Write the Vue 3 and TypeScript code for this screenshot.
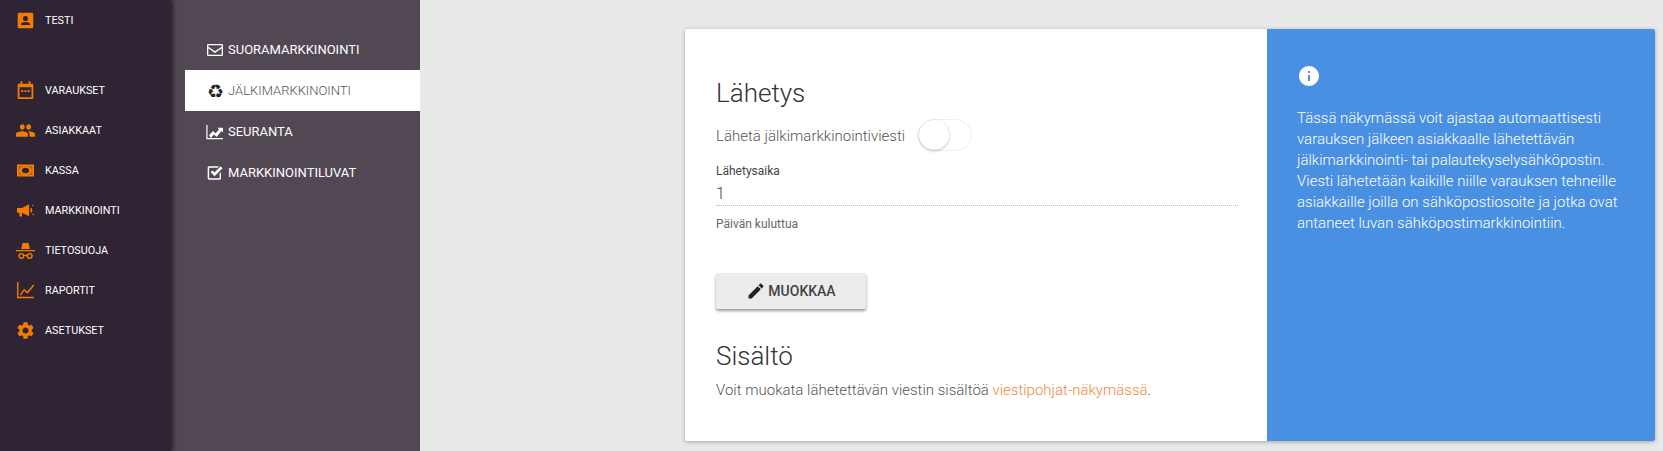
<template>
  <div class="app-shell">
    <aside class="main-nav">
      <a class="nav-item user-item">
        <svg class="nav-icon" viewBox="0 0 24 24"><path d="M3 1h18a2 2 0 0 1 2 2v18a2 2 0 0 1-2 2H3a2 2 0 0 1-2-2V3a2 2 0 0 1 2-2zm9 4.500a3.600 3.600 0 1 0 0 7.200 3.600 3.600 0 0 0 0-7.200zM5.500 18.500h13v-1.200c0-2.200-3.600-3.300-6.500-3.300s-6.500 1.100-6.500 3.300z" fill-rule="evenodd" /></svg>
        <span>TESTI</span>
      </a>
      <div class="nav-list">
        <a v-for="item in navItems" :key="item.label" class="nav-item">
          <svg class="nav-icon" viewBox="0 0 24 24" v-html="item.icon"></svg>
          <span>{{ item.label }}</span>
        </a>
      </div>
    </aside>

    <nav class="sub-nav">
      <a v-for="item in subItems" :key="item.label" class="sub-item" :class="{ active: item.active }">
        <span v-if="item.glyph" class="sub-glyph">{{ item.glyph }}</span>
        <svg v-else class="sub-icon" viewBox="0 0 24 24" v-html="item.icon"></svg>
        <span>{{ item.label }}</span>
      </a>
    </nav>

    <main class="content">
      <section class="card">
        <div class="card-body">
          <h2 class="title">Lähetys</h2>
          <div class="toggle-row">
            <span class="toggle-label">Lähetä jälkimarkkinointiviesti</span>
            <span class="toggle"><span class="knob"></span></span>
          </div>
          <div class="field">
            <label>Lähetysaika</label>
            <div class="field-value">1</div>
            <div class="field-hint">Päivän kuluttua</div>
          </div>
          <button class="edit-btn" type="button">
            <svg viewBox="0 0 24 24"><path d="M3 17.250V21h3.750L17.810 9.940l-3.750-3.750L3 17.250zM20.710 7.040c.39-.39.39-1.020 0-1.410l-2.340-2.340c-.39-.39-1.020-.39-1.410 0l-1.830 1.830 3.750 3.750 1.830-1.830z" /></svg>
            MUOKKAA
          </button>
          <h2 class="title second">Sisältö</h2>
          <p class="content-text">Voit muokata lähetettävän viestin sisältöä <a>viestipohjat-näkymässä</a>.</p>
        </div>
        <div class="info-panel">
          <svg class="info-icon" viewBox="2 2 20 20"><path d="M12 2C6.480 2 2 6.480 2 12s4.480 10 10 10 10-4.480 10-10S17.520 2 12 2zm1 15h-2v-6h2v6zm0-8h-2V7h2v2z" /></svg>
          <p>Tässä näkymässä voit ajastaa automaattisesti varauksen jälkeen asiakkaalle lähetettävän jälkimarkkinointi- tai palautekyselysähköpostin. Viesti lähetetään kaikille niille varauksen tehneille asiakkaille joilla on sähköpostiosoite ja jotka ovat antaneet luvan sähköpostimarkkinointiin.</p>
        </div>
      </section>
    </main>
  </div>
</template>

<script setup lang="ts">
interface NavItem {
  label: string
  icon: string
}

interface SubItem {
  label: string
  icon?: string
  glyph?: string
  active?: boolean
}

const navItems: NavItem[] = [
  {
    label: 'VARAUKSET',
    icon: '<path fill-rule="evenodd" d="M5 -1h2.500v3.500h9V-1H19v3.500h2.500A1.500 1.500 0 0 1 23 4v18.500a1.500 1.500 0 0 1-1.500 1.500h-19A1.500 1.500 0 0 1 1 22.500V4a1.500 1.500 0 0 1 1.500-1.500H5zM3.500 7.500V21.500h17V7.500z"/><path d="M6 11.500h3V14H6zm4.500 0h3V14h-3zm4.500 0h3V14h-3z"/>'
  },
  {
    label: 'ASIAKKAAT',
    icon: '<g transform="translate(12 12) scale(1.120) translate(-12 -12)"><path d="M16 11c1.660 0 2.990-1.340 2.990-3.500S17.660 4 16 4c-1.660 0-3 1.340-3 3.500s1.340 3.500 3 3.500zm-8 0c1.660 0 2.990-1.340 2.990-3.500S9.660 4 8 4C6.340 4 5 5.340 5 7.500S6.340 11 8 11zm0 2c-2.330 0-8 1.170-8 3.500V20h15v-3.500c0-2.330-4.670-3.500-7-3.500zm8 0c-.29 0-.62.020-.97.050 1.160.84 1.970 1.970 1.970 3.450V20h7v-3.500c0-2.330-5.670-3.500-8-3.500z"/></g>'
  },
  {
    label: 'KASSA',
    icon: '<path d="M0 3.500h24v17H0z"/><path d="M2.500 6h19v12h-19z" fill="#a85c14"/><ellipse cx="12" cy="12" rx="9" ry="6.500"/><ellipse cx="12" cy="12" rx="5" ry="3.800" fill="#2e2433"/>'
  },
  {
    label: 'MARKKINOINTI',
    icon: '<path d="M0 8.500h7L17 3v17L7 15v5.500H3.500V15H0z"/><path d="M19 8c1.600 0 2.600 1.600 2.600 3.500S20.600 15 19 15z"/><path d="M22 3.500l1.500 1-1 1.500-1.500-1zM22 17l1.500-1 .5 2-1.500 1z"/>'
  },
  {
    label: 'TIETOSUOJA',
    icon: '<g transform="translate(12 12) scale(1.120) translate(-12 -12)"><path fill-rule="evenodd" d="M6.500 10 8 3.500c.2-1 1-1.500 2-1.200l2 .7 2-.7c1-.3 1.800.2 2 1.200l1.500 6.500zM0 11.500h24V13H0zM6.700 15a3.800 3.800 0 1 1 0 7.600 3.800 3.800 0 0 1 0-7.600zm0 1.700a2.100 2.100 0 1 0 0 4.200 2.100 2.100 0 0 0 0-4.200zM17.300 15a3.800 3.800 0 1 1 0 7.600 3.800 3.800 0 0 1 0-7.600zm0 1.700a2.100 2.100 0 1 0 0 4.200 2.100 2.100 0 0 0 0-4.200zM10.500 17.500h3v1.700h-3z"/></g>'
  },
  {
    label: 'RAPORTIT',
    icon: '<path d="M0 0h2v20.800h22V23H0z"/><path d="M4 18l6-8.500 4.500 4L23 3.500l1.500 1.300L14.800 16.500l-4.500-4-4.700 6.700z"/>'
  },
  {
    label: 'ASETUKSET',
    icon: '<path transform="translate(-2.400 -2.400) scale(1.200)" d="M19.140 12.940c.04-.3.06-.61.060-.94 0-.32-.02-.64-.07-.94l2.030-1.580c.18-.14.230-.41.120-.61l-1.920-3.320c-.12-.22-.37-.29-.59-.22l-2.390.96c-.5-.38-1.030-.7-1.620-.94l-.36-2.540c-.04-.24-.24-.41-.48-.41h-3.840c-.24 0-.43.17-.47.41l-.36 2.540c-.59.24-1.130.57-1.620.94l-2.390-.96c-.22-.08-.47 0-.59.22L2.740 8.870c-.12.21-.08.47.12.61l2.030 1.580c-.05.3-.09.63-.09.94s.02.64.07.94l-2.030 1.580c-.18.14-.23.41-.12.61l1.920 3.320c.12.22.37.29.59.22l2.390-.96c.5.38 1.030.7 1.620.94l.36 2.540c.05.24.24.41.48.41h3.840c.24 0 .44-.17.47-.41l.36-2.540c.59-.24 1.130-.56 1.620-.94l2.390.96c.22.08.47 0 .59-.22l1.920-3.320c.12-.22.07-.47-.12-.61l-2.010-1.580zM12 15.600c-1.980 0-3.600-1.620-3.600-3.600s1.620-3.600 3.600-3.600 3.600 1.620 3.600 3.600-1.620 3.600-3.600 3.600z"/>'
  }
]

const subItems: SubItem[] = [
  {
    label: 'SUORAMARKKINOINTI',
    icon: '<path fill-rule="evenodd" d="M2 3h20a2 2 0 0 1 2 2v14a2 2 0 0 1-2 2H2a2 2 0 0 1-2-2V5a2 2 0 0 1 2-2zm0 2v2l10 7 10-7V5zm0 4.500V19h20V9.500L12 16.500z"/>'
  },
  { label: 'JÄLKIMARKKINOINTI', glyph: '\u267B', active: true },
  {
    label: 'SEURANTA',
    icon: '<path d="M-1 1.500h1.800V21H24v2H-1z"/><path d="M3 17l6-6.500 4 3.500 5-6-2.300-2.300H24v7l-2.300-2.300-7.300 9-4-3.500-4.700 5z"/>'
  },
  {
    label: 'MARKKINOINTILUVAT',
    icon: '<path fill-rule="evenodd" d="M3 2h15l-2 2.200H3.200v15.600h15.600V13l2.200-2.200V20a2 2 0 0 1-2 2H3a2 2 0 0 1-2-2V4a2 2 0 0 1 2-2z"/><path d="M5.500 11l2.800-2.800 3 3L20.500 2 23.300 4.800 11.300 16.800z"/>'
  }
]
</script>

<style>
html,
body {
  margin: 0;
  background: #e9e9e9;
}
</style>

<style scoped>
.app-shell {
  display: flex;
  height: 451px;
  overflow: hidden;
  font-family: Roboto, "Liberation Sans", sans-serif;
  background: #e9e9e9;
}

.main-nav {
  position: relative;
  z-index: 2;
  flex: 0 0 171px;
  box-sizing: border-box;
  background: #2e2433;
  box-shadow: 2px 0 4px rgba(0, 0, 0, 0.55);
}

.nav-list {
  margin-top: 30px;
}

.nav-item {
  display: flex;
  align-items: center;
  height: 40px;
  padding-left: 17px;
  color: #fff;
  font-size: 10.8px;
}

.nav-item span {
  margin-left: 11px;
}

.nav-icon {
  width: 17px;
  height: 17px;
  overflow: visible;
  fill: #f57c00;
}

.sub-nav {
  flex: 0 0 249px;
  box-sizing: border-box;
  padding: 29px 0 0 14px;
  background: #524853;
}

.sub-item {
  display: flex;
  align-items: center;
  height: 41px;
  padding-left: 22px;
  color: #fff;
  font-size: 13px;
}

.sub-item.active {
  background: #fff;
  color: #555;
  font-weight: 300;
}

.sub-icon {
  width: 16px;
  height: 16px;
  margin-right: 5px;
  overflow: visible;
  fill: #fff;
}

.sub-glyph {
  width: 16px;
  margin-right: 5px;
  color: #222;
  font-family: "DejaVu Sans", sans-serif;
  font-size: 19px;
  line-height: 16px;
  text-align: center;
}

.content {
  flex: 1;
  box-sizing: border-box;
  padding: 29px 8px 10px 265px;
}

.card {
  display: flex;
  height: 412px;
  background: #fff;
  border-radius: 2px;
  box-shadow: 0 1px 4px rgba(0, 0, 0, 0.3);
}

.card-body {
  flex: 0 0 582px;
  box-sizing: border-box;
  padding: 48px 29px 0 31px;
  color: #333;
}

.title {
  margin: 0;
  color: #333;
  font-size: 26px;
  font-weight: 300;
  line-height: 32px;
}

.toggle-row {
  display: flex;
  align-items: center;
  gap: 13px;
  margin-top: 10px;
  color: #555;
  font-size: 15px;
  font-weight: 300;
}

.toggle-label {
  padding-top: 2px;
}

.toggle {
  position: relative;
  display: block;
  box-sizing: border-box;
  width: 54px;
  height: 32px;
  border: 1px solid #eee;
  border-radius: 16px;
  background: #fff;
}

.knob {
  position: absolute;
  top: 0;
  left: 0;
  width: 30px;
  height: 30px;
  border-radius: 50%;
  background: #fff;
  box-shadow: 0 1px 3px rgba(0, 0, 0, 0.25);
}

.field {
  margin-top: 12px;
}

.field label {
  display: block;
  color: #444;
  font-size: 12px;
  line-height: 16px;
}

.field-value {
  height: 26px;
  border-bottom: 1px dotted #bbb;
  color: #444;
  font-size: 16px;
  font-weight: 300;
  line-height: 29px;
}

.field-hint {
  margin-top: 10px;
  color: #666;
  font-size: 12px;
  line-height: 16px;
}

.edit-btn {
  display: flex;
  align-items: center;
  justify-content: center;
  gap: 2px;
  width: 150px;
  height: 36px;
  margin-top: 41px;
  padding: 0;
  border: 0;
  border-radius: 2px;
  background: #ececec;
  box-shadow: 0 2px 3px rgba(0, 0, 0, 0.4);
  color: #444;
  font-family: inherit;
  font-size: 14px;
  font-weight: 500;
}

.edit-btn svg {
  width: 20px;
  height: 20px;
  fill: #222;
}

.title.second {
  margin-top: 31px;
}

.content-text {
  margin: 8px 0 0;
  color: #555;
  font-size: 15px;
  font-weight: 300;
  line-height: 20px;
}

.content-text a {
  color: #ee8a3c;
}

.info-panel {
  flex: 1;
  box-sizing: border-box;
  padding: 37px 24px 0 30px;
  border-radius: 0 2px 2px 0;
  background: #4a90e2;
  color: #fff;
}

.info-icon {
  display: block;
  width: 20px;
  height: 20px;
  margin-left: 2px;
  fill: #fff;
}

.info-panel p {
  margin: 22px 0 0;
  font-size: 15px;
  font-weight: 300;
  line-height: 21px;
}
</style>
